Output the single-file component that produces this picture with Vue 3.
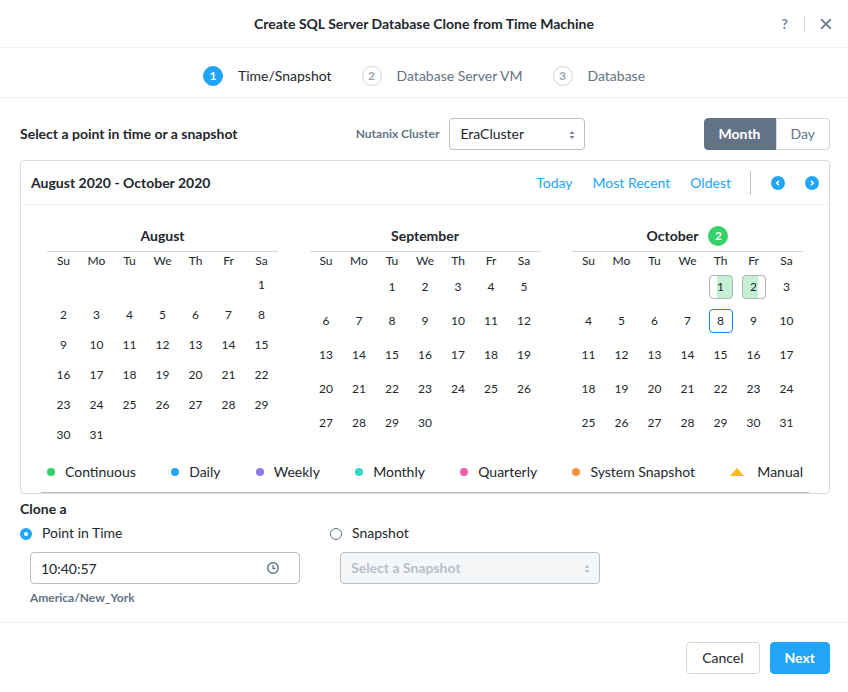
<script setup>
import { ref } from 'vue'

const steps = ['Time/Snapshot', 'Database Server VM', 'Database']
const weekdays = ['Su', 'Mo', 'Tu', 'We', 'Th', 'Fr', 'Sa']
const cloneType = ref('time')
const view = ref('Month')
const time = ref('10:40:57')

function buildWeeks(offset, total) {
  const cells = [...Array(offset).fill(null), ...Array.from({ length: total }, (_, i) => i + 1)]
  while (cells.length % 7) cells.push(null)
  const weeks = []
  for (let i = 0; i < cells.length; i += 7) weeks.push(cells.slice(i, i + 7))
  return weeks
}

const months = [
  { name: 'August', weeks: buildWeeks(6, 31), marks: {} },
  { name: 'September', weeks: buildWeeks(2, 30), marks: {} },
  { name: 'October', count: 2, weeks: buildWeeks(4, 31), marks: { 1: 'late', 2: 'early', 8: 'today' } },
]

const legend = [
  { label: 'Continuous', kind: 'continuous' },
  { label: 'Daily', kind: 'daily' },
  { label: 'Weekly', kind: 'weekly' },
  { label: 'Monthly', kind: 'monthly' },
  { label: 'Quarterly', kind: 'quarterly' },
  { label: 'System Snapshot', kind: 'system' },
  { label: 'Manual', kind: 'manual' },
]
</script>

<template>
  <div class="dialog">
    <header class="header">
      <h1>Create SQL Server Database Clone from Time Machine</h1>
      <div class="header-actions">
        <button type="button" class="help" aria-label="Help">?</button>
        <button type="button" class="close" aria-label="Close">
          <svg width="12" height="12" viewBox="0 0 12 12"><path d="M1.2 1.2 10.8 10.8M10.8 1.2 1.2 10.8" stroke="#7a8799" stroke-width="2" fill="none" /></svg>
        </button>
      </div>
    </header>

    <ol class="steps">
      <li v-for="(step, i) in steps" :key="step" :class="{ active: i === 0 }">
        <span class="step-number">{{ i + 1 }}</span>
        <span>{{ step }}</span>
      </li>
    </ol>

    <main class="body">
      <div class="toolbar">
        <h2>Select a point in time or a snapshot</h2>
        <div class="cluster">
          <label for="cluster">Nutanix Cluster</label>
          <div class="select cluster-select">
            <select id="cluster"><option>EraCluster</option></select>
            <svg class="arrows" width="6" height="8" viewBox="0 0 6 8"><path d="M3 0 5.5 3h-5zM3 8 .5 5h5z" fill="#7a8799" /></svg>
          </div>
        </div>
        <div class="toggle">
          <button type="button" :class="{ on: view === 'Month' }" @click="view = 'Month'">Month</button>
          <button type="button" :class="{ on: view === 'Day' }" @click="view = 'Day'">Day</button>
        </div>
      </div>

      <section class="card">
        <div class="card-header">
          <h2>August 2020 - October 2020</h2>
          <nav class="links">
            <a href="#today">Today</a>
            <a href="#recent">Most Recent</a>
            <a href="#oldest">Oldest</a>
          </nav>
          <div class="pager">
            <button type="button" aria-label="Previous months">
              <svg width="14" height="14" viewBox="0 0 14 14"><circle cx="7" cy="7" r="7" fill="#22a5f7" /><path d="M8 4.8 5.8 7 8 9.2" stroke="#fff" stroke-width="1.5" fill="none" /></svg>
            </button>
            <button type="button" aria-label="Next months">
              <svg width="14" height="14" viewBox="0 0 14 14"><circle cx="7" cy="7" r="7" fill="#22a5f7" /><path d="M6 4.8 8.2 7 6 9.2" stroke="#fff" stroke-width="1.5" fill="none" /></svg>
            </button>
          </div>
        </div>

        <div class="calendar">
          <div class="months">
            <table v-for="m in months" :key="m.name" :class="{ compact: m.weeks.length > 5 }">
              <caption>
                <span class="month-title">{{ m.name }}<span v-if="m.count" class="count">{{ m.count }}</span></span>
              </caption>
              <thead>
                <tr><th v-for="d in weekdays" :key="d" scope="col">{{ d }}</th></tr>
              </thead>
              <tbody>
                <tr v-for="(week, w) in m.weeks" :key="w">
                  <td v-for="(day, d) in week" :key="d">
                    <button v-if="day" type="button" class="day" :class="m.marks[day]">{{ day }}</button>
                  </td>
                </tr>
              </tbody>
            </table>
          </div>
          <ul class="legend">
            <li v-for="l in legend" :key="l.kind">
              <svg v-if="l.kind === 'manual'" class="triangle" width="14" height="8" viewBox="0 0 14 8"><path d="M7 0 14 8H0z" fill="#ffbc0b" /></svg>
              <span v-else class="dot" :class="l.kind"></span>
              <span>{{ l.label }}</span>
            </li>
          </ul>
        </div>
      </section>

      <section class="clone">
        <h2>Clone a</h2>
        <div class="options">
          <div>
            <label class="radio"><input v-model="cloneType" type="radio" name="clone" value="time" /><span>Point in Time</span></label>
            <div class="field time-field">
              <input v-model="time" type="text" class="time" aria-label="Time" />
              <svg class="clock" width="12" height="12" viewBox="0 0 12 12"><circle cx="6" cy="6" r="5.2" stroke="#627386" stroke-width="1.5" fill="none" /><path d="M6 3v3.5h2.6" stroke="#627386" stroke-width="1.3" fill="none" /></svg>
            </div>
            <p class="zone">America/New_York</p>
          </div>
          <div>
            <label class="radio"><input v-model="cloneType" type="radio" name="clone" value="snapshot" /><span>Snapshot</span></label>
            <div class="field select snapshot-field">
              <select disabled aria-label="Snapshot"><option>Select a Snapshot</option></select>
              <svg class="arrows" width="6" height="8" viewBox="0 0 6 8"><path d="M3 0 5.5 3h-5zM3 8 .5 5h5z" fill="#b8bfca" /></svg>
            </div>
          </div>
        </div>
      </section>
    </main>

    <footer class="footer">
      <button type="button" class="cancel">Cancel</button>
      <button type="button" class="next">Next</button>
    </footer>
  </div>
</template>

<style>
body {
  background: #fff;
}
</style>

<style scoped>
.dialog,
.dialog * {
  box-sizing: border-box;
}
.dialog {
  font-family: Lato, "Liberation Sans", sans-serif;
  font-size: 14px;
  line-height: 20px;
  color: #22272e;
}
h1,
h2,
p,
ol,
ul {
  margin: 0;
  padding: 0;
  list-style: none;
}
h1,
h2 {
  font-size: 14px;
  font-weight: 700;
}
button,
input,
select {
  font: inherit;
  color: inherit;
  margin: 0;
}
button {
  padding: 0;
  border: 0;
  background: none;
  cursor: pointer;
}
svg {
  display: block;
}
.header {
  display: grid;
  grid-template-columns: 1fr auto 1fr;
  align-items: center;
  height: 48px;
  padding: 0 16px;
  border-bottom: 1px solid #f0f1f3;
}
.header h1 {
  grid-column: 2;
}
.header-actions {
  display: flex;
  justify-content: flex-end;
  align-items: center;
}
.help {
  padding-right: 16px;
  font-weight: 700;
  color: #7a8799;
  line-height: 16px;
}
.close {
  padding: 2px 0 2px 15px;
  border-left: 1px solid #d1d6de;
}
.steps {
  display: flex;
  justify-content: center;
  gap: 30px;
  padding: 18px 0 11px;
  border-bottom: 1px solid #f0f1f3;
}
.steps li {
  display: flex;
  align-items: center;
  gap: 15px;
  color: #627386;
}
.steps .active {
  color: #22272e;
}
.step-number {
  width: 20px;
  height: 20px;
  border: 1px solid #d1d3dc;
  border-radius: 50%;
  font-size: 12px;
  font-weight: 700;
  line-height: 18px;
  text-align: center;
  color: #9aa5b5;
}
.active .step-number {
  border-color: #22a5f7;
  background: #22a5f7;
  color: #fff;
}
.body {
  padding: 20px 18px 0 20px;
}
.toolbar {
  display: flex;
  justify-content: space-between;
  align-items: center;
}
.cluster {
  display: flex;
  align-items: center;
  gap: 10px;
}
.cluster label,
.zone {
  font-size: 12px;
  font-weight: 700;
  color: #627386;
}
.select,
.time-field {
  position: relative;
}
.cluster-select {
  width: 136px;
}
select,
.time {
  appearance: none;
  display: block;
  width: 100%;
  height: 32px;
  padding: 0 10px;
  border: 1px solid #b8bfca;
  border-radius: 4px;
  background: #fff;
}
select:disabled {
  background: #f4f6f8;
  color: #b8bfca;
  font-weight: 700;
  opacity: 1;
}
.arrows {
  position: absolute;
  right: 10px;
  top: 13px;
}
.clock {
  position: absolute;
  right: 21px;
  top: 10px;
}
.toggle {
  display: flex;
}
.toggle button {
  height: 32px;
  padding: 0 14px;
  border: 1px solid #d1d6de;
  border-radius: 0 4px 4px 0;
  color: #627386;
}
.toggle button:first-child {
  border-radius: 4px 0 0 4px;
}
.toggle .on {
  border-color: #627386;
  background: #627386;
  color: #fff;
  font-weight: 700;
}
.card {
  margin-top: 10px;
  border: 1px solid #d8dbe0;
  border-radius: 4px;
}
.card-header {
  display: flex;
  align-items: center;
  height: 44px;
  padding: 0 10px;
  border-bottom: 1px solid #f0f1f3;
}
.links {
  display: flex;
  gap: 20px;
  margin-left: auto;
  padding-right: 19px;
}
.links a {
  color: #22a5f7;
  text-decoration: none;
}
.pager {
  display: flex;
  align-items: center;
  gap: 20px;
  height: 24px;
  padding-left: 20px;
  border-left: 1px solid #b8bfca;
}
.calendar {
  margin: 0 20px;
  padding: 20px 6px 0;
  border-bottom: 1px solid #b8bfca;
}
.months {
  display: flex;
  justify-content: space-between;
  align-items: flex-start;
}
table {
  width: 231px;
  border-collapse: collapse;
  table-layout: fixed;
  font-size: 12px;
}
caption {
  height: 27px;
  border-bottom: 1px solid #d1d6de;
  font-size: 14px;
  font-weight: 700;
}
.month-title {
  display: flex;
  justify-content: center;
  align-items: center;
  gap: 10px;
  height: 22px;
}
.count {
  width: 20px;
  height: 20px;
  border-radius: 50%;
  background: #36d068;
  font-size: 12px;
  color: #fff;
}
th {
  height: 18px;
  padding: 0;
  font-weight: 400;
  line-height: 18px;
}
td {
  height: 34px;
  padding: 0;
  text-align: center;
}
.compact td {
  height: 30px;
}
.day {
  width: 24px;
  height: 24px;
  border: 1px solid transparent;
  border-radius: 4px;
  line-height: 22px;
  vertical-align: middle;
}
.late {
  border-color: #b0b3b8;
  background: linear-gradient(to right, #fff 32%, #c3f1d2 32%);
}
.early {
  border-color: #b0b3b8;
  background: linear-gradient(to right, #c3f1d2 68%, #fff 68%);
}
.today {
  border-color: #1b84dc;
}
.legend {
  display: flex;
  justify-content: space-between;
  padding: 12px 0 10px;
}
.legend li {
  display: flex;
  align-items: center;
  gap: 10px;
}
.dot {
  width: 8px;
  height: 8px;
  border-radius: 50%;
}
.triangle {
  margin-right: 3px;
}
.continuous {
  background: #36d068;
}
.daily {
  background: #22a5f7;
}
.weekly {
  background: #8c78eb;
}
.monthly {
  background: #32d7cb;
}
.quarterly {
  background: #ed5fb5;
}
.system {
  background: #ff8f3e;
}
.clone {
  padding-top: 5px;
}
.options {
  display: grid;
  grid-template-columns: repeat(2, minmax(0, 310px));
}
.radio {
  display: flex;
  align-items: center;
  gap: 10px;
  padding: 4px 0;
}
.radio input {
  appearance: none;
  width: 12px;
  height: 12px;
  margin-top: 2px;
  border: 1px solid #627386;
  border-radius: 50%;
}
.radio input:checked {
  border: 4px solid #22a5f7;
}
.field {
  margin: 5px 20px 0 10px;
}
.time-field {
  margin-right: 30px;
}
.snapshot-field {
  margin-right: 40px;
}
.zone {
  margin: 4px 0 0 10px;
}
.footer {
  display: flex;
  justify-content: flex-end;
  gap: 10px;
  margin-top: 14px;
  padding: 19px 18px 18px;
  border-top: 1px solid #f0f1f3;
}
.footer button {
  height: 32px;
  padding: 0 15px;
  border: 1px solid #d1d6de;
  border-radius: 4px;
}
.footer .next {
  padding: 0 14px;
  border-color: #22a5f7;
  background: #22a5f7;
  color: #fff;
  font-weight: 700;
}
</style>
